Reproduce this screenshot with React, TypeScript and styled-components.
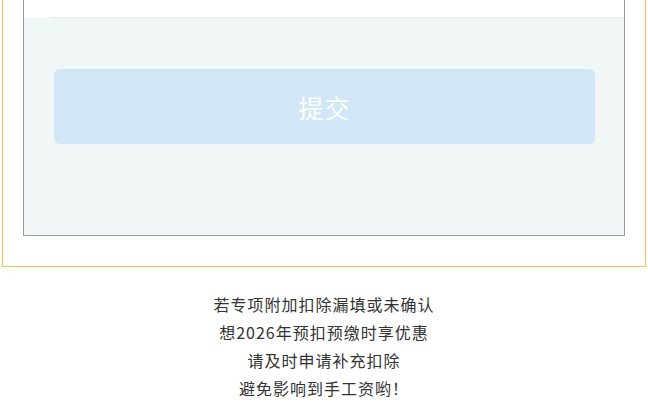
import React from "react";
import styled, { createGlobalStyle } from "styled-components";

const GlobalStyle = createGlobalStyle`
  body {
    margin: 0;
    background: #fff;
    font-family: "Noto Sans CJK SC", "Liberation Sans", sans-serif;
  }
`;

const Page = styled.div`
  width: 648px;
  padding: 0 2px;
  box-sizing: border-box;
`;

const Frame = styled.div`
  border: 1px solid #f6c044;
  border-top: none;
  padding: 0 20px 30px;
`;

const Panel = styled.div`
  border: 1px solid #9a9a9a;
  border-top: none;
  background: #f1f6f7;
`;

const ListTail = styled.div`
  background: #fff;
  padding-left: 26px;
  & > div {
    height: 17px;
    border-bottom: 1px solid #e8ecef;
  }
`;

const Actions = styled.div`
  padding: 51px 29px 91px 30px;
`;

const SubmitButton = styled.button<{ $disabled?: boolean }>`
  display: flex;
  align-items: center;
  justify-content: center;
  width: 100%;
  height: 75px;
  border: none;
  border-radius: 6px;
  background: ${(p) => (p.$disabled ? "#d1e6f7" : "#2f8fe8")};
  color: #fff;
  font-family: "Noto Sans CJK SC", sans-serif;
  font-size: 25px;
  letter-spacing: 1px;
`;

const Notice = styled.div`
  margin-top: 23px;
  text-align: center;
  font-size: 16px;
  letter-spacing: 1px;
  line-height: 28px;
  color: #333;
`;

const lines = [
  "若专项附加扣除漏填或未确认",
  "想2026年预扣预缴时享优惠",
  "请及时申请补充扣除",
  "避免影响到手工资哟！",
];

const App = (): JSX.Element => {
  return (
    <>
      <GlobalStyle />
      <Page>
        <Frame>
          <Panel>
            <ListTail>
              <div />
            </ListTail>
            <Actions>
              <SubmitButton $disabled>提交</SubmitButton>
            </Actions>
          </Panel>
        </Frame>
        <Notice>
          {lines.map((l) => (
            <div key={l}>{l}</div>
          ))}
        </Notice>
      </Page>
    </>
  );
};

export default App;
